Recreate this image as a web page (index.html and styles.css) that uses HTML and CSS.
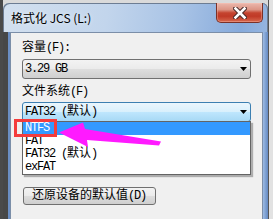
FILE: index.html
```html
<!DOCTYPE html>
<html lang="zh-CN">
<head>
<meta charset="utf-8">
<title>格式化 JCS (L:)</title>
<link rel="stylesheet" href="styles.css">
</head>
<body>
<div class="screen-left"></div>
<div class="window">
  <div class="titlebar">
    <span class="title">格式化 JCS (L:)</span>
    <div class="close">
      <svg width="14" height="12" viewBox="0 0 14 12">
        <path d="M2.5 1.5 L11.5 10.5 M11.5 1.5 L2.5 10.5" stroke="#4a2a28" stroke-width="4.6" stroke-linecap="square" fill="none"/>
        <path d="M2.5 1.5 L11.5 10.5 M11.5 1.5 L2.5 10.5" stroke="#ffffff" stroke-width="2.6" stroke-linecap="square" fill="none"/>
      </svg>
    </div>
  </div>
  <div class="frame">
    <div class="frame-left"></div>
    <div class="client">
      <div class="label"><span class="c">容量</span>(F):</div>
      <div class="combo">
        <span>3.29 GB</span>
        <svg class="drop" width="7" height="4" viewBox="0 0 7 4"><polygon points="0,0 7,0 3.5,4" fill="#000"/></svg>
      </div>
      <div class="label label2"><span class="c">文件系统</span>(F)</div>
      <div class="combo-wrap">
        <div class="combo hot">
          <span>FAT32 (<span class="c">默认</span>)</span>
          <svg class="drop" width="7" height="4" viewBox="0 0 7 4"><polygon points="0,0 7,0 3.5,4" fill="#000"/></svg>
        </div>
        <ul class="list">
          <li class="sel">NTFS</li>
          <li>FAT</li>
          <li>FAT32 (<span class="c">默认</span>)</li>
          <li>exFAT</li>
        </ul>
      </div>
      <button class="btn"><span class="c">还原设备的默认值</span>(D)</button>
    </div>
    <div class="frame-right"></div>
  </div>
</div>
<div class="screen-right"></div>
<div class="redbox"></div>
<svg class="pointer" width="273" height="219" viewBox="0 0 273 219">
  <polygon points="59,132.5 83,122.5 85,129 161,141.5 159,145.5 87,140 88,147" fill="#ff1aff"/>
</svg>
</body>
</html>
```
FILE: styles.css
```css
html, body {
  margin: 0;
  padding: 0;
}
body {
  width: 273px;
  height: 219px;
  overflow: hidden;
  position: relative;
  display: flex;
  background: #dadada;
  font-family: "Liberation Mono", "Noto Sans CJK SC", monospace;
  font-size: 12px;
  letter-spacing: -1.2px;
  color: #000;
}
.c {
  font-family: "Noto Sans CJK SC", sans-serif;
  letter-spacing: 0;
  line-height: 0;
}
.screen-left {
  flex: none;
  width: 3px;
  background: #4a4a4a;
}
.screen-right {
  flex: 1;
  background: linear-gradient(to right, #555 0 1px, #e2e2e2 1px);
}
.window {
  flex: none;
  width: 265px;
  margin-top: 3px;
  display: flex;
  flex-direction: column;
  border-radius: 6px 6px 0 0;
  overflow: hidden;
  background: linear-gradient(100deg, #d3e0ef 0%, #c2d5ec 35%, #a7c2e5 60%, #86aadb 80%, #a9c3e6 100%);
  box-shadow: inset 1px 1px 0 #6d7d93, inset -1px 0 0 #6d7d93;
}
.titlebar {
  flex: none;
  height: 29px;
  display: flex;
  align-items: flex-start;
  padding: 0 5px 0 8px;
}
.title {
  margin-top: 7px;
  font-family: "Noto Sans CJK SC", sans-serif;
  font-size: 12px;
  line-height: 16px;
  letter-spacing: 0;
  color: #000;
  text-shadow: 0 0 4px rgba(255, 255, 255, 0.8);
}
.close {
  margin-left: auto;
  width: 47px;
  height: 20px;
  box-sizing: border-box;
  border: 1px solid #7b3128;
  border-top: none;
  border-radius: 0 0 5px 5px;
  background: linear-gradient(to bottom, #ebb8ad 0%, #dc9585 35%, #c5442f 52%, #c03a27 70%, #d6684e 100%);
  box-shadow: inset 0 0 0 1px rgba(255, 200, 190, 0.35);
  display: flex;
  align-items: center;
  justify-content: center;
}
.close svg {
  display: block;
  margin-top: 1px;
  margin-left: 1px;
}
.frame {
  flex: 1;
  display: flex;
}
.frame-left {
  flex: none;
  width: 7px;
  background: linear-gradient(to right, #474747 0 5px, #6b8ec3 5px 7px);
}
.frame-right {
  flex: none;
  width: 5px;
  background: linear-gradient(to right, #9dbbe3, #6389c2);
}
.client {
  flex: 1;
  background: #f0f0f0;
  border: 1px solid #7b8ea8;
  border-bottom: none;
  padding: 8px 0 0 11px;
}
.label {
  height: 14px;
  line-height: 14px;
  white-space: nowrap;
}
.label2 {
  margin-top: 6px;
}
.combo {
  margin-top: 4px;
  width: 229px;
  height: 20px;
  box-sizing: border-box;
  border: 1px solid #707070;
  border-radius: 3px;
  background: linear-gradient(to bottom, #f3f3f3 0%, #ebebeb 48%, #dddddd 52%, #cfcfcf 100%);
  display: flex;
  align-items: center;
  padding-left: 2px;
  line-height: 14px;
  white-space: nowrap;
}
.combo .drop {
  margin-left: auto;
  margin-right: 3px;
  display: block;
}
.combo-wrap {
  margin-top: 3px;
  position: relative;
  width: 229px;
}
.combo.hot {
  margin-top: 0;
  border-color: #3c7fb1;
  background: linear-gradient(to bottom, #eaf6fd 0%, #d9f0fc 48%, #bee6fd 52%, #a7d9f5 100%);
}
.list {
  position: absolute;
  top: 19px;
  left: 0;
  width: 229px;
  box-sizing: border-box;
  margin: 0;
  padding: 0;
  list-style: none;
  background: #fff;
  border: 1px solid #646464;
  box-shadow: 2px 2px 1px rgba(0, 0, 0, 0.28);
}
.list li {
  height: 13px;
  line-height: 13px;
  padding-left: 2px;
  white-space: nowrap;
}
.list li.sel {
  background: #3399ff;
  color: #fff;
}
.btn {
  display: block;
  margin: 65px 0 0 1px;
  width: 133px;
  height: 18px;
  box-sizing: border-box;
  border: 1px solid #707070;
  border-radius: 3px;
  background: linear-gradient(to bottom, #f3f3f3 0%, #ebebeb 48%, #dddddd 52%, #cfcfcf 100%);
  padding: 0 0 0 8px;
  text-align: left;
  font: inherit;
  letter-spacing: inherit;
  line-height: 16px;
  color: #000;
  white-space: nowrap;
}
.redbox {
  position: absolute;
  left: 14px;
  top: 119px;
  width: 43px;
  height: 18px;
  box-sizing: border-box;
  border: 3px solid #f43c3c;
}
.pointer {
  position: absolute;
  left: 0;
  top: 0;
  pointer-events: none;
}
```
